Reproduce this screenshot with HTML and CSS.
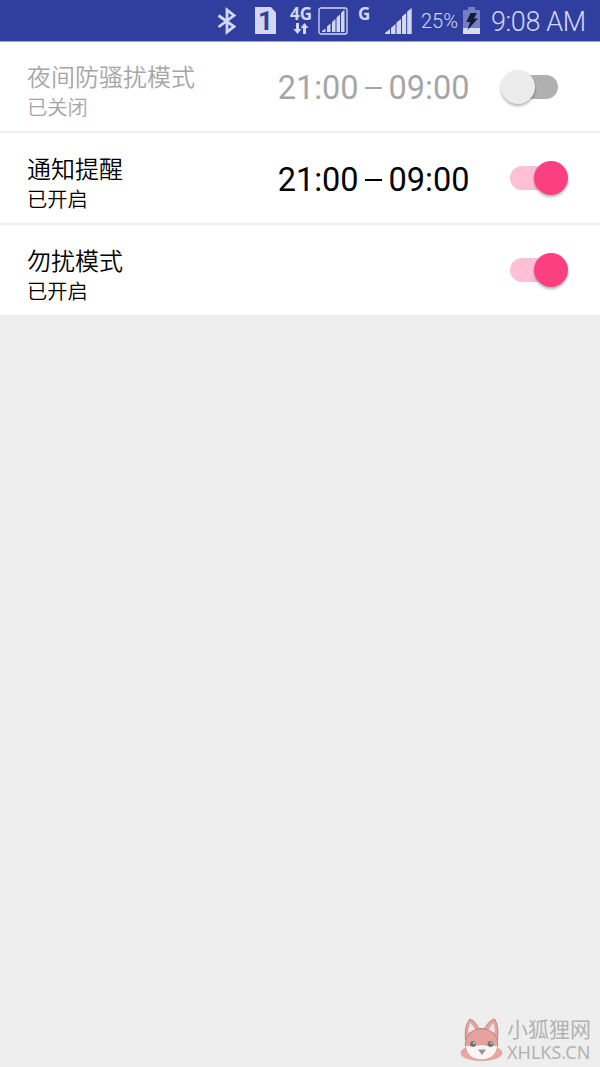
FILE: index.html
```html
<!DOCTYPE html>
<html lang="zh-CN">
<head>
<meta charset="utf-8">
<title>勿扰模式</title>
<link rel="stylesheet" href="styles.css">
</head>
<body>
<header class="status">
  <svg class="bluetooth" width="20" height="28" viewBox="0 0 20 28"><path d="M1.500 8.500 17 19.500 10 25V3l7 5.500L1.500 20" fill="none" stroke="currentColor" stroke-width="2.800"/></svg>
  <span class="sim">1</span>
  <div class="network">
    <span class="net-label">4G</span>
    <svg width="16" height="12" viewBox="0 0 16 12" fill="currentColor"><path d="M3 0h3v6h2.500L4.500 11 .5 6H3zM10 11h3V5h2.500L11.500 0l-4 5H10z"/></svg>
  </div>
  <svg class="boxed-signal" width="30" height="28" viewBox="0 0 30 28"><rect x="1" y="1" width="28" height="26" rx="2" fill="none" stroke="currentColor" stroke-width="1.300"/><path d="M4 25v-1l3.500-2.500V25zM9 25v-5.500l3.500-3V25zM14 25V15l3.500-3v13zM18.500 25V10.500L22 7.500V25zM23 25V6l3.500-3.500V25z" fill="currentColor"/></svg>
  <span class="net-label roaming">G</span>
  <svg class="signal" width="28" height="28" viewBox="0 0 28 28"><path d="M0 27v-1l5-4v5zM6 27v-6l4.500-4v10zM11.500 27V15.500L16 12v15zM17 27V9.500L21.200 6v21zM22.200 27V4.500L26.700 1v26z" fill="currentColor"/></svg>
  <span class="percent">25%</span>
  <svg class="battery" width="18" height="28" viewBox="0 0 18 28"><path d="M5 0h7v3H17v19H0V3h5z" fill="#7580c3"/><path d="M0 21h17v6H0z" fill="#d9dcf2"/><path d="M7.500 6h6.500L11 11.500h4L4.500 23 7 15H3.300z" fill="#171b38"/></svg>
  <span class="clock">9:08 AM</span>
</header>
<main class="settings">
  <section class="row disabled">
    <div class="labels"><div class="title">夜间防骚扰模式</div><div class="state">已关闭</div></div>
    <div class="period"><span>21:00</span><i class="dash"></i><span>09:00</span></div>
    <div class="switch"><i class="thumb"></i></div>
  </section>
  <section class="row">
    <div class="labels"><div class="title">通知提醒</div><div class="state">已开启</div></div>
    <div class="period"><span>21:00</span><i class="dash"></i><span>09:00</span></div>
    <div class="switch on"><i class="thumb"></i></div>
  </section>
  <section class="row">
    <div class="labels"><div class="title">勿扰模式</div><div class="state">已开启</div></div>
    <div class="switch on"><i class="thumb"></i></div>
  </section>
</main>
<footer class="watermark">
  <svg width="44" height="46" viewBox="0 0 44 46">
    <ellipse cx="22.500" cy="35" rx="21" ry="8" fill="#e9a5a2"/>
    <path d="M6.500 22C5.500 13 7 5 11 1c5 2 7 6 9 9.500h6C28 6 31 2 35.500 1c3.500 5 4 12 3 21z" fill="#e5a29e" stroke="#a4817f" stroke-width=".8"/>
    <path d="M9.500 15c-.5-4 0-7 2-10 3 3 4 5 5 7zM35.500 15c.5-4 0-7-1-10-3 3-4 5-5 7z" fill="#f2e6e5"/>
    <ellipse cx="22.500" cy="26" rx="16.300" ry="15.500" fill="#e5a29e" stroke="#a4817f" stroke-width=".8"/>
    <path d="M6.700 28h10l5.800-1 5.800 1h10C37.500 36.500 31 41.500 22.500 41.500S7.500 36.500 6.700 28z" fill="#f8f5f5"/>
    <circle cx="14" cy="26" r="2.900" fill="#777"/><circle cx="31.500" cy="26" r="2.900" fill="#777"/>
    <circle cx="15" cy="25" r=".9" fill="#ddd"/><circle cx="32.500" cy="25" r=".9" fill="#ddd"/>
    <path d="M19 31.500h8L23 37z" fill="#969696"/>
  </svg>
  <div class="brand"><div class="brand-name">小狐狸网</div><div class="brand-url">XHLKS.CN</div></div>
</footer>
</body>
</html>
```
FILE: styles.css
```css
* { box-sizing: border-box; }
body {
  margin: 0;
  height: 1067px;
  display: flex;
  flex-direction: column;
  overflow: hidden;
  background: #eee;
  color: #000;
  font-family: Roboto, "Noto Sans CJK SC", sans-serif;
}
svg { display: block; flex: none; }

.status {
  height: 42px;
  flex: none;
  display: flex;
  align-items: flex-start;
  padding: 7px 0 0 217px;
  background: #303f9f;
  border-bottom: 1px solid #9a9fcb;
  color: #d3d7f1;
  white-space: nowrap;
}
.sim {
  width: 21px;
  height: 27px;
  margin-left: 18px;
  background: #d3d7f1;
  clip-path: polygon(0 0, 76% 0, 100% 20%, 100% 100%, 0 100%);
  color: #303f9f;
  font: 700 26px/29px Roboto, sans-serif;
  text-align: center;
}
.network {
  width: 24px;
  margin-left: 13px;
  display: flex;
  flex-direction: column;
  align-items: center;
}
.net-label { font: 700 17px/14px "Noto Sans", sans-serif; }
.network svg { margin-top: 2px; }
.boxed-signal { margin-left: 5px; }
.roaming { width: 14px; margin-left: 10px; }
.signal { margin-left: 13px; }
.percent {
  width: 38px;
  margin-left: 8px;
  font-size: 20px;
  font-weight: 300;
  line-height: 29px;
}
.battery { margin-left: 4px; }
.clock {
  margin-left: 10px;
  font-size: 27px;
  font-weight: 300;
  line-height: 31px;
  letter-spacing: -.4px;
}

.settings { background: #fff; }
.row {
  height: 92px;
  display: flex;
  align-items: center;
  padding: 0 32px 0 27px;
  border-bottom: 2px solid #eee;
}
.row:first-child { height: 91px; }
.row:first-child .labels { padding-top: 10px; }
.row:last-child { height: 90px; border-bottom: 0; }
.disabled { color: #a6a6a6; }
.labels { flex: 1; padding-top: 12px; font-weight: 350; }
.title { font-size: 24px; line-height: 32px; }
.state { font-size: 20.300px; line-height: 28px; }
.period {
  display: flex;
  align-items: center;
  font-size: 32.500px;
  line-height: 40px;
  padding-top: 3px;
}
.dash { width: 17px; height: 2px; margin: 0 6.500px; background: currentColor; }
.switch {
  position: relative;
  width: 48px;
  height: 24px;
  margin: 0 10px 0 40.500px;
  border-radius: 12px;
  background: #b0b0b0;
}
.thumb {
  position: absolute;
  top: -5px;
  left: -9px;
  width: 34px;
  height: 34px;
  border-radius: 50%;
  background: #ececec;
  box-shadow: 0 2px 3px rgba(0, 0, 0, .3);
}
.on { background: #ffc0d5; }
.on .thumb { left: 24px; background: #fc3f7f; }

.watermark {
  margin: auto 9px 3px auto;
  display: flex;
  align-items: flex-start;
  gap: 4px;
  color: #b2b2b2;
}
.brand-name { font-size: 21px; line-height: 25px; }
.brand-url { font: 400 18px/18px "Noto Sans", sans-serif; }
```
